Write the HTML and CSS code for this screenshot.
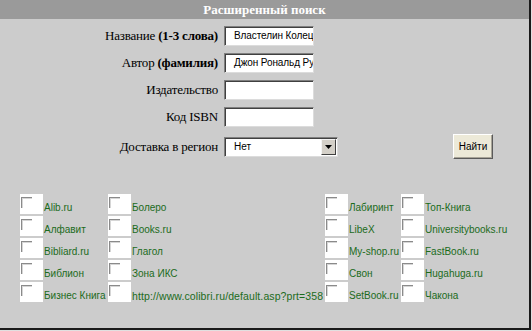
FILE: index.html
```html
<!DOCTYPE html>
<html>
<head>
<meta charset="utf-8">
<link rel="stylesheet" href="styles.css">
</head>
<body>
<div class="page">
  <div class="title">Расширенный поиск</div>
  <div class="form">
    <div class="label">Название <b>(1-3 слова)</b></div>
    <div class="field"><div class="input">Властелин Колец</div></div>
    <div></div>
    <div class="label">Автор <b>(фамилия)</b></div>
    <div class="field"><div class="input">Джон Рональд Руэ</div></div>
    <div></div>
    <div class="label">Издательство</div>
    <div class="field"><div class="input"></div></div>
    <div></div>
    <div class="label">Код ISBN</div>
    <div class="field"><div class="input"></div></div>
    <div></div>
    <div class="label">Доставка в регион</div>
    <div class="field"><div class="select"><span class="sel-text">Нет</span><span class="arrow"><svg width="7" height="4" viewBox="0 0 7 4"><path d="M0 0H7L3.5 4Z" fill="#000"/></svg></span></div></div>
    <div><div class="btn">Найти</div></div>
  </div>
  <div class="shops">
    <div class="cb"><span class="box"></span></div><div class="name">Alib.ru</div>
    <div class="cb"><span class="box"></span></div><div class="name">Болеро</div>
    <div class="cb"><span class="box"></span></div><div class="name">Лабиринт</div>
    <div class="cb"><span class="box"></span></div><div class="name">Топ-Книга</div>

    <div class="cb"><span class="box"></span></div><div class="name">Алфавит</div>
    <div class="cb"><span class="box"></span></div><div class="name">Books.ru</div>
    <div class="cb"><span class="box"></span></div><div class="name">LibeX</div>
    <div class="cb"><span class="box"></span></div><div class="name">Universitybooks.ru</div>

    <div class="cb"><span class="box"></span></div><div class="name">Bibliard.ru</div>
    <div class="cb"><span class="box"></span></div><div class="name">Глагол</div>
    <div class="cb"><span class="box"></span></div><div class="name">My-shop.ru</div>
    <div class="cb"><span class="box"></span></div><div class="name">FastBook.ru</div>

    <div class="cb"><span class="box"></span></div><div class="name">Библион</div>
    <div class="cb"><span class="box"></span></div><div class="name">Зона ИКС</div>
    <div class="cb"><span class="box"></span></div><div class="name">Свон</div>
    <div class="cb"><span class="box"></span></div><div class="name">Hugahuga.ru</div>

    <div class="cb"><span class="box"></span></div><div class="name">Бизнес Книга</div>
    <div class="cb"><span class="box"></span></div><div class="name url">http://www.colibri.ru/default.asp?prt=358</div>
    <div class="cb"><span class="box"></span></div><div class="name">SetBook.ru</div>
    <div class="cb"><span class="box"></span></div><div class="name">Чакона</div>
  </div>
</div>
</body>
</html>
```
FILE: styles.css
```css
html {
  background: #e0e0e0;
}
body {
  margin: 0;
  width: 532px;
  height: 331px;
  overflow: hidden;
}
.page {
  width: 529px;
  height: 328px;
  background: #cccccc;
  border-right: 2px solid #1a1a1a;
  border-bottom: 2px solid #1a1a1a;
  font-family: "Liberation Serif", "Times New Roman", serif;
}
.title {
  height: 19px;
  line-height: 19px;
  background: #9a9a9a;
  color: #fff;
  font-weight: bold;
  font-size: 13px;
  text-align: center;
}
.form {
  display: grid;
  grid-template-columns: 218px 116px 1fr;
  column-gap: 6px;
  row-gap: 7px;
  padding-top: 7px;
  align-items: center;
}
.label {
  text-align: right;
  font-size: 13px;
  letter-spacing: -0.2px;
  color: #000;
  white-space: nowrap;
}
.input {
  box-sizing: border-box;
  width: 90px;
  height: 20px;
  background: #fff;
  border: 1px solid;
  border-color: #7f7f7f #dcdcdc #dcdcdc #7f7f7f;
  box-shadow: inset 1px 1px 0 #404040;
  font-family: "Liberation Sans", Arial, sans-serif;
  font-size: 10px;
  letter-spacing: -0.1px;
  line-height: 18px;
  padding-left: 9px;
  white-space: nowrap;
  overflow: hidden;
}
.select {
  box-sizing: border-box;
  width: 114px;
  height: 20px;
  background: #fff;
  border: 1px solid;
  border-color: #7f7f7f #dcdcdc #dcdcdc #7f7f7f;
  box-shadow: inset 1px 1px 0 #404040;
  display: flex;
  align-items: center;
  justify-content: space-between;
  font-family: "Liberation Sans", Arial, sans-serif;
  font-size: 10px;
}
.sel-text {
  padding-left: 9px;
}
.arrow {
  box-sizing: border-box;
  width: 15px;
  height: 16px;
  margin-right: 1px;
  background: #d4d0c8;
  border: 1px solid;
  border-color: #f4f4f4 #404040 #404040 #f4f4f4;
  display: flex;
  align-items: center;
  justify-content: center;
}
.btn {
  box-sizing: border-box;
  margin-left: 107px;
  width: 40px;
  height: 25px;
  background: #ece9d8;
  border: 1px solid;
  border-color: #ffffff #5a5a5a #5a5a5a #ffffff;
  box-shadow: inset -1px -1px 0 #a8a498;
  font-family: "Liberation Sans", Arial, sans-serif;
  font-size: 10px;
  line-height: 23px;
  text-align: center;
  color: #000;
}
.shops {
  display: grid;
  grid-template-columns: 23px 65px 23px 194px 23px 53px 23px 86px;
  grid-auto-rows: 20px;
  row-gap: 2px;
  justify-content: center;
  margin-top: 35px;
  margin-left: 1px;
}
.cb {
  background: #fff;
  position: relative;
}
.box {
  position: absolute;
  left: 1px;
  top: 3px;
  box-sizing: border-box;
  width: 11px;
  height: 11px;
  border-top: 1px solid #8a8a8a;
  border-left: 1px solid #8a8a8a;
  box-shadow: inset 1px 1px 0 #d6d6d6;
  background: #fff;
}
.name {
  display: flex;
  align-items: flex-end;
  font-family: "Liberation Sans", Arial, sans-serif;
  font-size: 10px;
  line-height: 12px;
  color: #1b6b1b;
  white-space: nowrap;
  padding-left: 1px;
}
.url {
  font-size: 10.5px;
  letter-spacing: 0.1px;
}
```
